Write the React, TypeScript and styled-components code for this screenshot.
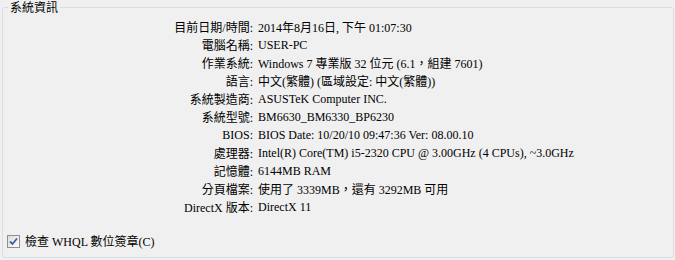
import React from 'react';
import styled, { createGlobalStyle } from 'styled-components';

const GlobalStyle = createGlobalStyle`
  html, body {
    margin: 0;
    padding: 0;
    background: #f0f0f0;
  }
  body {
    font-family: 'Liberation Serif', 'Noto Sans CJK TC', serif;
    font-size: 12px;
    color: #000;
  }
`;

const rows: [string, string][] = [
  ['目前日期/時間:', '2014年8月16日, 下午 01:07:30'],
  ['電腦名稱:', 'USER-PC'],
  ['作業系統:', 'Windows 7 專業版 32 位元 (6.1，組建 7601)'],
  ['語言:', '中文(繁體) (區域設定: 中文(繁體))'],
  ['系統製造商:', 'ASUSTeK Computer INC.'],
  ['系統型號:', 'BM6630_BM6330_BP6230'],
  ['BIOS:', 'BIOS Date: 10/20/10 09:47:36 Ver: 08.00.10'],
  ['處理器:', 'Intel(R) Core(TM) i5-2320 CPU @ 3.00GHz (4 CPUs), ~3.0GHz'],
  ['記憶體:', '6144MB RAM'],
  ['分頁檔案:', '使用了 3339MB，還有 3292MB 可用'],
  ['DirectX 版本:', 'DirectX 11'],
];

const App = () => {
  return (
    <>
      <GlobalStyle />
      <Page>
        <Group>
          <Legend>系統資訊</Legend>
          <InfoGrid>
            {rows.map(([label, value]) => (
              <React.Fragment key={label}>
                <Label>{label}</Label>
                <Value>{value}</Value>
              </React.Fragment>
            ))}
          </InfoGrid>
          <CheckRow>
            <CheckBox>
              <svg width="9" height="9" viewBox="0 0 9 9">
                <path d="M1 4.5 L3.5 7 L8 1.5" fill="none" stroke="#3c5fa8" strokeWidth="1.8" />
              </svg>
            </CheckBox>
            <CheckText>檢查 WHQL 數位簽章(C)</CheckText>
          </CheckRow>
        </Group>
      </Page>
    </>
  );
};

const Page = styled.div`
  width: 675px;
  height: 260px;
  padding: 0 1px 0 2px;
  box-sizing: border-box;
`;

const Group = styled.fieldset`
  margin: 0;
  height: 258px;
  box-sizing: border-box;
  border: 1px solid #d5dfe5;
  border-radius: 3px;
  padding: 4px 0 0 0;
  min-width: 0;
`;

const Legend = styled.legend`
  margin-left: 5px;
  padding: 0 2px;
  font-size: 12px;
  line-height: 14px;
  font-family: 'Noto Sans CJK TC', sans-serif;
`;

const InfoGrid = styled.div`
  display: grid;
  grid-template-columns: 250px 1fr;
  column-gap: 5px;
  grid-auto-rows: 18px;
  align-items: center;
`;

const Label = styled.div`
  text-align: right;
  white-space: nowrap;
`;

const Value = styled.div`
  white-space: nowrap;
`;

const CheckRow = styled.label`
  display: flex;
  align-items: center;
  gap: 5px;
  margin-top: 16px;
  padding-left: 4px;
`;

const CheckBox = styled.span`
  display: flex;
  align-items: center;
  justify-content: center;
  width: 11px;
  height: 11px;
  border: 1px solid #8f8f8f;
  background: linear-gradient(135deg, #dcdcdc, #fbfbfb);
`;

const CheckText = styled.span``;

export default App;
